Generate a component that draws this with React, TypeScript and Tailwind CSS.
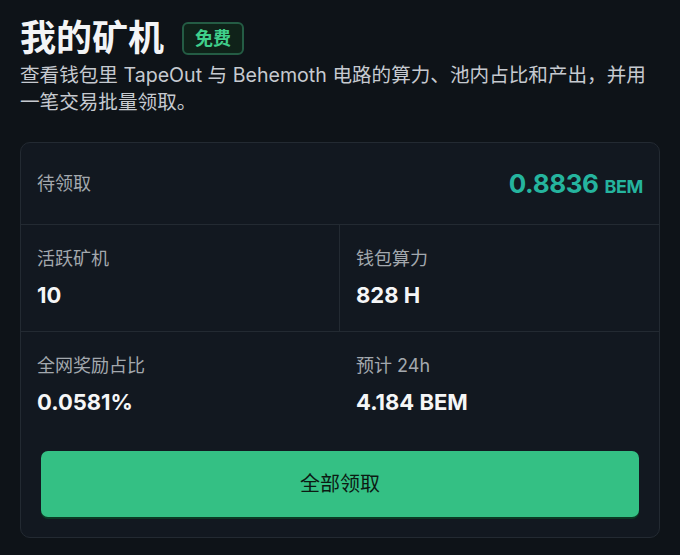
const stats = [
  { label: "活跃矿机", value: "10" },
  { label: "钱包算力", value: "828 H" },
  { label: "全网奖励占比", value: "0.0581%" },
  { label: "预计 24h", value: "4.184 BEM" },
];

export default function App() {
  return (
    <div
      className="w-[680px] h-[555px] bg-[#0e1318] px-5 pt-[18px] overflow-hidden"
      style={{ fontFamily: 'Inter, "Noto Sans CJK SC", sans-serif' }}
    >
      {/* header */}
      <div className="flex items-center gap-[18px]">
        <h1 className="text-[36px] leading-[40px] font-bold text-[#f3f4f6]">我的矿机</h1>
        <span className="h-[33px] px-[11px] flex items-center rounded-[6px] border-2 border-[#245c44] bg-[#0f2219] text-[18px] font-bold text-[#3fcf8b]">
          免费
        </span>
      </div>
      <p className="mt-[4px] text-[19.6px] leading-[27px] text-[#c6cad0]">
        查看钱包里 TapeOut 与 Behemoth 电路的算力、池内占比和产出，并用一笔交易批量领取。
      </p>

      {/* card */}
      <div className="mt-[26px] rounded-[10px] border border-[#232a32] bg-[#121820]">
        <div className="h-[82px] px-4 flex items-center justify-between border-b border-[#232a32]">
          <span className="text-[18px] text-[#a3a8ae]">待领取</span>
          <span className="font-bold text-[#25b49e] tracking-tight">
            <span className="text-[26px]">0.8836</span>
            <span className="text-[18px] ml-[6px]">BEM</span>
          </span>
        </div>

        <div className="grid grid-cols-2 border-b border-[#232a32]">
          {stats.slice(0, 2).map((s, i) => (
            <div
              key={s.label}
              className={`px-4 pt-[21px] pb-[21px] ${i === 0 ? "border-r border-[#232a32]" : ""}`}
            >
              <div className="text-[18px] leading-[26px] text-[#a3a8ae]">{s.label}</div>
              <div className="mt-[8px] text-[22px] leading-[30px] font-bold text-[#f5f6f7]">{s.value}</div>
            </div>
          ))}
        </div>

        <div className="grid grid-cols-2">
          {stats.slice(2).map((s) => (
            <div key={s.label} className="px-4 pt-[21px]">
              <div className="text-[18px] leading-[26px] text-[#a3a8ae]">{s.label}</div>
              <div className="mt-[8px] text-[22px] leading-[30px] font-bold text-[#f5f6f7]">{s.value}</div>
            </div>
          ))}
        </div>

        <div className="px-5 pt-[34px] pb-5">
          <button className="w-full h-[66px] rounded-[7px] bg-[#34c084] text-[20px] text-[#0c1a13] shadow-[0_2px_0_#0a3a24]">
            全部领取
          </button>
        </div>
      </div>
    </div>
  );
}
